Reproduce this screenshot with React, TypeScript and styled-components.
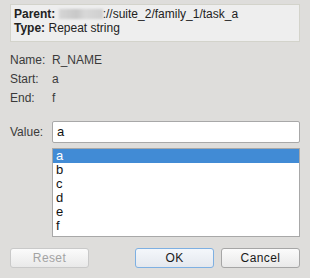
import React from "react";
import styled, { createGlobalStyle } from "styled-components";

const Global = createGlobalStyle`
  html, body {
    margin: 0;
    padding: 0;
    background: #dedddb;
  }
  body {
    font-family: "Liberation Sans", Arial, sans-serif;
    font-size: 12px;
    color: #333333;
  }
`;

const Dialog = styled.div`
  width: 310px;
  height: 278px;
  box-sizing: border-box;
  padding: 4px 10px 0 10px;
  display: flex;
  flex-direction: column;
`;

const InfoBox = styled.div`
  background: #eeeeee;
  border: 1px solid #d3d3cb;
  padding: 2px 3px 6px 3px;
  line-height: 14px;
  color: #222222;
`;

const InfoLine = styled.div`
  white-space: nowrap;
  b {
    font-weight: bold;
  }
`;

const Blur = styled.span`
  display: inline-block;
  width: 44px;
  height: 10px;
  vertical-align: -1px;
  background: linear-gradient(90deg, #d6d6d6, #c8c8c8 40%, #d8d8d8 60%, #cfcfcf);
  filter: blur(1.2px);
`;

const Fields = styled.div`
  margin-top: 9px;
  display: grid;
  grid-template-columns: 42px 1fr;
  grid-auto-rows: 19px;
  line-height: 19px;
`;

const Label = styled.div`
  color: #3a3a3a;
`;

const Value = styled.div`
  color: #3a3a3a;
`;

const ValueRow = styled.div`
  margin-top: 13px;
  display: grid;
  grid-template-columns: 42px 1fr;
  align-items: center;
`;

const TextInput = styled.div`
  height: 22px;
  box-sizing: border-box;
  border: 1px solid #a8a8a8;
  border-radius: 2px;
  background: #ffffff;
  padding: 0 4px;
  line-height: 20px;
  font-size: 13px;
  color: #111111;
`;

const List = styled.div`
  margin: 5px 0 0 42px;
  height: 89px;
  box-sizing: border-box;
  border: 1px solid #a8a8a8;
  background: #ffffff;
  overflow: hidden;
`;

const ListItem = styled.div<{ $selected?: boolean }>`
  height: 14px;
  line-height: 14px;
  padding-left: 3px;
  font-size: 13px;
  background: ${(p) => (p.$selected ? "#418bd5" : "transparent")};
  color: ${(p) => (p.$selected ? "#ffffff" : "#111111")};
`;

const ButtonBar = styled.div`
  margin-top: 11px;
  display: flex;
  align-items: center;
  gap: 7px;
`;

const Spacer = styled.div`
  flex: 1;
`;

const Button = styled.button<{ $variant?: "default" | "disabled" | "normal" }>`
  width: 79px;
  height: 20px;
  box-sizing: border-box;
  padding: 0;
  border-radius: 3px;
  font-family: "Liberation Sans", Arial, sans-serif;
  font-size: 12px;
  letter-spacing: 0.4px;
  background: linear-gradient(#fbfbfb, #e9e9e9);
  border: 1px solid
    ${(p) =>
      p.$variant === "default"
        ? "#7eb0e2"
        : p.$variant === "disabled"
        ? "#c9c9c9"
        : "#a6a6a6"};
  color: ${(p) => (p.$variant === "disabled" ? "#a3a3a3" : "#1a1a1a")};
  ${(p) => p.$variant === "default" && "background: linear-gradient(#f4f7fb, #e4e8ee);"}
`;

const items = ["a", "b", "c", "d", "e", "f"];

export default function App() {
  return (
    <>
      <Global />
      <Dialog>
        <InfoBox>
          <InfoLine>
            <b>Parent:</b> <Blur />://suite_2/family_1/task_a
          </InfoLine>
          <InfoLine>
            <b>Type:</b> Repeat string
          </InfoLine>
        </InfoBox>
        <Fields>
          <Label>Name:</Label>
          <Value>R_NAME</Value>
          <Label>Start:</Label>
          <Value>a</Value>
          <Label>End:</Label>
          <Value>f</Value>
        </Fields>
        <ValueRow>
          <Label>Value:</Label>
          <TextInput>a</TextInput>
        </ValueRow>
        <List>
          {items.map((it, i) => (
            <ListItem key={it} $selected={i === 0}>
              {it}
            </ListItem>
          ))}
        </List>
        <ButtonBar>
          <Button $variant="disabled">Reset</Button>
          <Spacer />
          <Button $variant="default">OK</Button>
          <Button $variant="normal">Cancel</Button>
        </ButtonBar>
      </Dialog>
    </>
  );
}
